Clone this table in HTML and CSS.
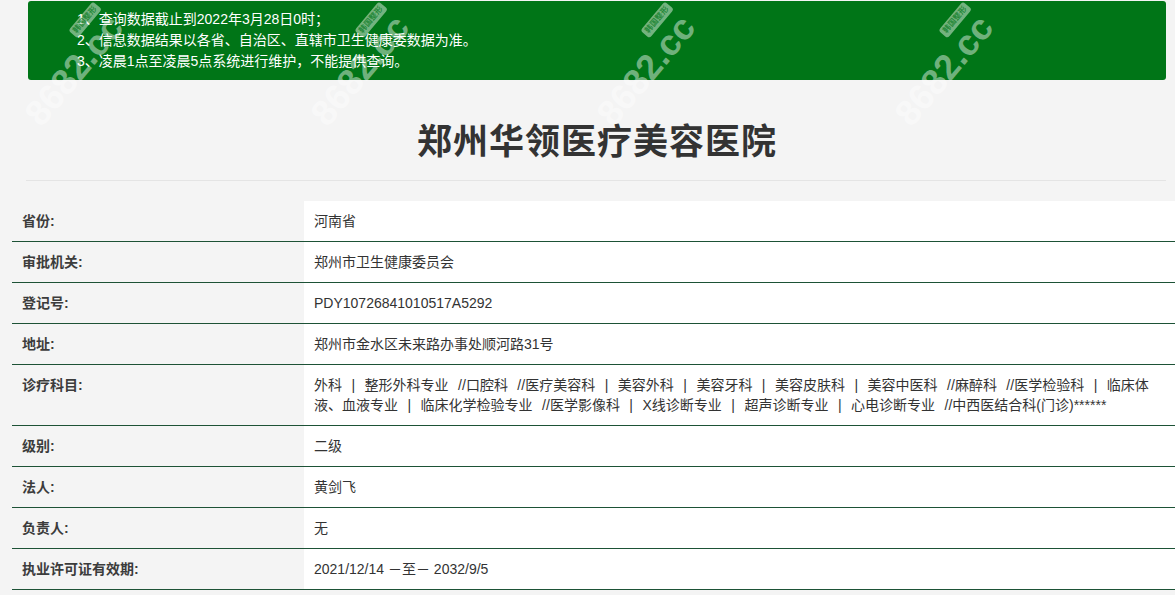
FILE: index.html
```html
<!DOCTYPE html>
<html lang="zh-CN">
<head>
<meta charset="utf-8">
<title>郑州华领医疗美容医院</title>
<link rel="stylesheet" href="styles.css">
</head>
<body>
<div class="page">
  <div class="notice">
    <p>1、查询数据截止到2022年3月28日0时；</p>
    <p>2、信息数据结果以各省、自治区、直辖市卫生健康委数据为准。</p>
    <p>3、凌晨1点至凌晨5点系统进行维护，不能提供查询。</p>
  </div>
  <h1 class="title">郑州华领医疗美容医院</h1>
  <div class="rule"></div>
  <table class="info">
    <tr><th>省份:</th><td>河南省</td></tr>
    <tr><th>审批机关:</th><td>郑州市卫生健康委员会</td></tr>
    <tr><th>登记号:</th><td>PDY10726841010517A5292</td></tr>
    <tr><th>地址:</th><td>郑州市金水区未来路办事处顺河路31号</td></tr>
    <tr><th>诊疗科目:</th><td class="wide">外科 | 整形外科专业 //口腔科 //医疗美容科 | 美容外科 | 美容牙科 | 美容皮肤科 | 美容中医科 //麻醉科 //医学检验科 | 临床体液、血液专业 | 临床化学检验专业 //医学影像科 | X线诊断专业 | 超声诊断专业 | 心电诊断专业 //中西医结合科(门诊)******</td></tr>
    <tr><th>级别:</th><td>二级</td></tr>
    <tr><th>法人:</th><td>黄剑飞</td></tr>
    <tr><th>负责人:</th><td>无</td></tr>
    <tr><th>执业许可证有效期:</th><td>2021/12/14 －至－ 2032/9/5</td></tr>
  </table>
</div>
<div class="wm wm1"><span class="tag">韩国整形</span>8682.cc</div>
<div class="wm wm2"><span class="tag">韩国整形</span>8682.cc</div>
<div class="wm wm3"><span class="tag">韩国整形</span>8682.cc</div>
<div class="wm wm4"><span class="tag">韩国整形</span>8682.cc</div>
</body>
</html>
```

FILE: styles.css
```css
html, body {
  margin: 0;
  padding: 0;
  background: #f4f4f4;
  overflow: hidden;
}
body {
  font-family: "Liberation Sans", "Noto Sans CJK SC", sans-serif;
  color: #333;
  width: 1175px;
  height: 595px;
  position: relative;
}
.page {
  display: flex;
  flex-direction: column;
}
.notice {
  margin: 1px 0 0 28px;
  width: 1138px;
  box-sizing: border-box;
  background: #007517;
  border-radius: 3px;
  padding: 8px 0 8px 49px;
  color: #fff;
  font-size: 14px;
  line-height: 21px;
}
.notice p {
  margin: 0;
}
.title {
  margin: 40px 0 17px 28px;
  width: 1138px;
  text-align: center;
  font-size: 35px;
  line-height: 43px;
  font-weight: 700;
  color: #333;
  letter-spacing: 1px;
}
.rule {
  margin: 0 0 20px 26px;
  width: 1140px;
  height: 1px;
  background: #e4e4e4;
}
.info {
  margin-left: 12px;
  width: 1163px;
  border-collapse: collapse;
  font-size: 14px;
  line-height: 20px;
}
.info th, .info td {
  padding: 10px 10px;
  border-bottom: 1px solid #1d5236;
  vertical-align: top;
  text-align: left;
}
.info th {
  width: 272px;
  font-weight: 700;
  color: #3c3c3c;
}
.info td {
  background: #fff;
  color: #333;
  padding-right: 20px;
}
.info td.wide {
  word-spacing: 5.6px;
}
.wm {
  position: absolute;
  font-family: "Liberation Sans", "Noto Sans CJK SC", sans-serif;
  font-size: 36px;
  line-height: 36px;
  font-weight: 700;
  color: rgba(255, 255, 255, 0.45);
  transform: rotate(-50deg);
  transform-origin: left bottom;
  white-space: nowrap;
  pointer-events: none;
}
.wm .tag {
  position: absolute;
  right: 0;
  top: -12px;
  font-size: 8px;
  line-height: 10px;
  padding: 1px 3px;
  border-radius: 3px;
  background: rgba(255, 255, 255, 0.45);
  color: rgba(0, 117, 23, 0.7);
}
.wm1 { left: 46px; top: 96px; }
.wm2 { left: 332px; top: 96px; }
.wm3 { left: 618px; top: 96px; }
.wm4 { left: 916px; top: 96px; }
```
